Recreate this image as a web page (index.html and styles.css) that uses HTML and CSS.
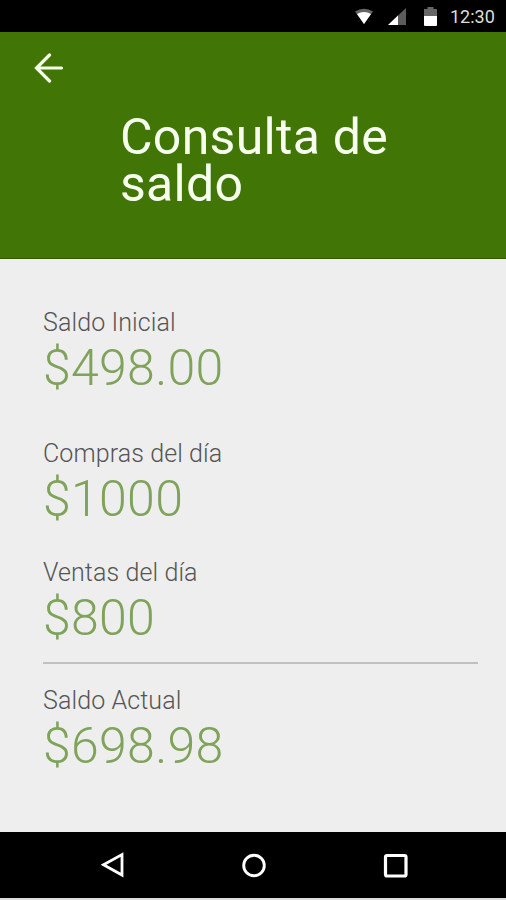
FILE: index.html
```html
<!DOCTYPE html>
<html lang="es">
<head>
  <meta charset="UTF-8" />
  <meta name="viewport" content="width=device-width, initial-scale=1.0"/>
  <title>Consulta de saldo</title>
  <link rel="stylesheet" href="styles.css">
</head>
<body>
  <div class="statusbar">
    <svg class="wifi" width="20" height="17" viewBox="0 0 20 17">
      <path d="M1 3.500Q10 -2 19 3.500L10 16Z" fill="#666"/>
      <path d="M3 6Q10 2 17 6L10 16Z" fill="#fff"/>
    </svg>
    <svg class="signal" width="18" height="17" viewBox="0 0 18 17">
      <path d="M0 17L18 0V17Z" fill="#5c5c5c"/>
      <path d="M0 17L10 7.500V17Z" fill="#fff"/>
    </svg>
    <svg class="battery" width="13" height="19" viewBox="0 0 13 19">
      <path d="M0 2H3.500V0H9.500V2H13V10H0Z" fill="#666"/>
      <path d="M0 9H13V18Q13 19 12 19H1Q0 19 0 18Z" fill="#fff"/>
    </svg>
    <span class="time">12:30</span>
  </div>

  <header class="header">
    <svg class="back" width="30" height="30" viewBox="0 0 30 30">
      <path d="M15.500 2L2.500 15L15.500 28M2.500 15H27.500" fill="none" stroke="#f4ffe8" stroke-width="3.200" stroke-linecap="round"/>
    </svg>
    <h1>Consulta de saldo</h1>
  </header>

  <main class="content">
    <div class="item first">
      <p class="label">Saldo Inicial</p>
      <p class="amount">$498.00</p>
    </div>
    <div class="item">
      <p class="label">Compras del día</p>
      <p class="amount">$1000</p>
    </div>
    <div class="item">
      <p class="label">Ventas del día</p>
      <p class="amount">$800</p>
    </div>
    <div class="item total">
      <p class="label">Saldo Actual</p>
      <p class="amount">$698.98</p>
    </div>
  </main>

  <nav class="navbar">
    <svg width="26" height="28" viewBox="0 0 26 28">
      <path d="M22 3.500V24L3.500 13.700Z" fill="none" stroke="#fff" stroke-width="2.800"/>
    </svg>
    <svg width="26" height="28" viewBox="0 0 26 28">
      <circle cx="13" cy="14.500" r="10.300" fill="none" stroke="#fff" stroke-width="2.900"/>
    </svg>
    <svg width="26" height="28" viewBox="0 0 26 28">
      <rect x="3.500" y="4.500" width="20.500" height="20.500" rx="1.500" fill="none" stroke="#fff" stroke-width="3.200"/>
    </svg>
  </nav>
</body>
</html>
```
FILE: styles.css
```css
* {
  box-sizing: border-box;
}
body {
  font-family: Roboto, sans-serif;
  background: #eee;
  margin: 0;
  height: 900px;
  display: flex;
  flex-direction: column;
}
h1, p {
  margin: 0;
}
.statusbar {
  height: 32px;
  background: #000;
  display: flex;
  align-items: center;
  justify-content: flex-end;
  padding-right: 11px;
}
.signal {
  margin-left: 14px;
}
.battery {
  margin-left: 18px;
}
.time {
  margin-left: 13px;
  width: 45px;
  color: #ddd;
  font-size: 18px;
  white-space: nowrap;
}
.header {
  height: 227px;
  background: #417505;
  border-bottom: 1px solid #2f5a00;
  padding: 21px 0 0 34px;
}
.back {
  display: block;
}
h1 {
  width: 300px;
  margin: 31px 0 0 86px;
  color: #f7ffee;
  font-size: 50px;
  font-weight: 400;
  letter-spacing: 0.3px;
  line-height: 47px;
}
.content {
  flex: 1;
  padding: 46px 28px 0 43px;
}
.item {
  height: 119px;
}
.item.first {
  height: 131px;
}
.item.total {
  margin-top: -12px;
  padding-top: 19px;
  border-top: 2px solid #bfc0bf;
}
.label {
  color: #555;
  font-size: 25px;
  font-weight: 300;
  letter-spacing: 0.1px;
  line-height: 36px;
}
.amount {
  color: #7fa35a;
  font-size: 50px;
  font-weight: 300;
  letter-spacing: 0.3px;
  line-height: 55px;
}
.navbar {
  height: 68px;
  background: #000;
  border-bottom: 2px solid #ddd;
  display: flex;
  align-items: center;
  justify-content: space-between;
  padding: 0 98px 0 100px;
}
```
